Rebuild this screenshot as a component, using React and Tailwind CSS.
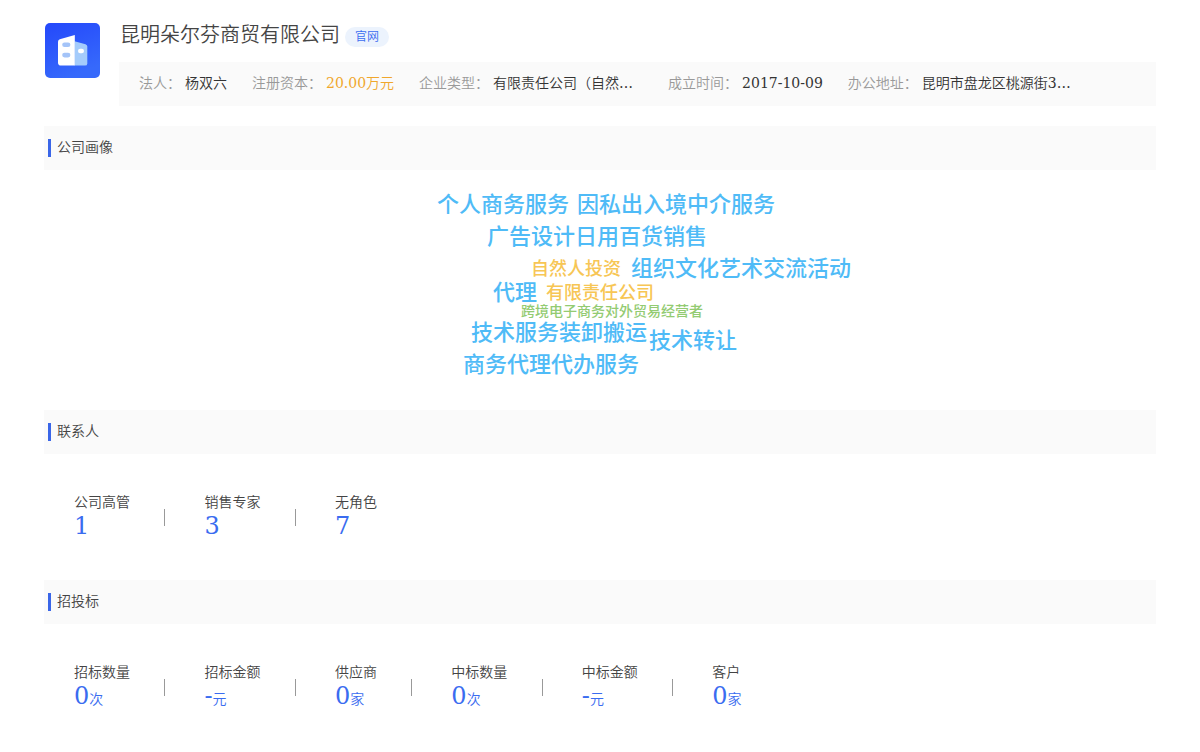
import React from 'react';

const INFO = [
  { label: '法人：', value: '杨双六' },
  { label: '注册资本：', value: '20.00万元', highlight: true },
  { label: '企业类型：', value: '有限责任公司（自然…', wide: true },
  { label: '成立时间：', value: '2017-10-09' },
  { label: '办公地址：', value: '昆明市盘龙区桃源街3…', wide: true },
];

// left/top are relative to the centre column of the cloud
const WORDS = [
  { text: '个人商务服务', className: 'left-0 top-[5px] text-[22px] text-[#4fbbf7]' },
  { text: '因私出入境中介服务', className: 'left-[140px] top-[5px] text-[22px] text-[#4fbbf7]' },
  { text: '广告设计', className: 'left-[50px] top-[37px] text-[22px] text-[#4fbbf7]' },
  { text: '日用百货销售', className: 'left-[138px] top-[37px] text-[22px] text-[#4fbbf7]' },
  { text: '自然人投资', className: 'left-[94px] top-[72px] text-[18px] text-[#f7c655]' },
  { text: '组织文化艺术交流活动', className: 'left-[194px] top-[69px] text-[22px] text-[#4fbbf7]' },
  { text: '代理', className: 'left-[56px] top-[93px] text-[22px] text-[#4fbbf7]' },
  { text: '有限责任公司', className: 'left-[109px] top-[96px] text-[18px] text-[#f7c655]' },
  { text: '跨境电子商务对外贸易经营者', className: 'left-[84px] top-[117px] text-[14px] text-[#93cb72]' },
  { text: '技术服务', className: 'left-[34px] top-[133px] text-[22px] text-[#4fbbf7]' },
  { text: '装卸搬运', className: 'left-[122px] top-[133px] text-[22px] text-[#4fbbf7]' },
  { text: '技术转让', className: 'left-[212px] top-[141px] text-[22px] text-[#4fbbf7]' },
  { text: '商务代理代办服务', className: 'left-[26px] top-[165px] text-[22px] text-[#4fbbf7]' },
];

const CONTACTS = [
  { label: '公司高管', value: '1' },
  { label: '销售专家', value: '3' },
  { label: '无角色', value: '7' },
];

const BIDS = [
  { label: '招标数量', value: '0', unit: '次' },
  { label: '招标金额', value: '-', unit: '元' },
  { label: '供应商', value: '0', unit: '家' },
  { label: '中标数量', value: '0', unit: '次' },
  { label: '中标金额', value: '-', unit: '元' },
  { label: '客户', value: '0', unit: '家' },
];

const CompanyLogo = () => (
  <svg viewBox="0 0 55 55" className="w-[55px] h-[55px] shrink-0" aria-hidden="true">
    <defs>
      <linearGradient id="logo-bg" x1="0" y1="0" x2="0.4" y2="1">
        <stop offset="0" stopColor="#2448fb" />
        <stop offset="1" stopColor="#3669fb" />
      </linearGradient>
    </defs>
    <rect width="55" height="55" rx="5" fill="url(#logo-bg)" />
    <path d="M29.5 18.2 40.5 21.2Q42.3 21.8 42.3 23.6V40.4Q42.3 42.6 40 42.6H29.5Z" fill="#a4cbfb" />
    <path d="M14.8 16.2 29.8 12V42.6H16Q13 42.6 13 39.8V18.6Q13 16.8 14.8 16.2Z" fill="#fff" />
    <rect x="17.2" y="19.4" width="8.2" height="4.6" rx="2.3" fill="#a4c4f8" />
    <rect x="17.2" y="29.8" width="8.2" height="4.6" rx="2.3" fill="#a4c4f8" />
    <rect x="33" y="25.8" width="6" height="4.4" rx="2.2" fill="#fff" />
  </svg>
);

const SectionTitle = ({ children }) => (
  <div className="flex h-11 items-center gap-1.5 bg-[#fafafa] pl-1">
    <span className="h-[18px] w-[3px] bg-[#3a66e8]" />
    <h2 className="pb-0.5 leading-5">{children}</h2>
  </div>
);

const StatList = ({ items }) => (
  <div className="px-[30px] pt-[38px]">
    {items.map((item, i) => (
      <React.Fragment key={item.label}>
        {i > 0 && (
          <>
            {' '}
            <span className="mr-[39px] inline-block h-[17px] w-px bg-[#999] align-middle" />
          </>
        )}
        <div className={i < items.length - 1 ? 'mr-[30px] inline-block align-middle' : 'inline-block align-middle'}>
          <div className="leading-5">{item.label}</div>
          <div className="leading-7 text-[#3a6cf0]">
            <span className="text-2xl leading-7">{item.value}</span>
            {item.unit}
          </div>
        </div>
      </React.Fragment>
    ))}
  </div>
);

const App = () => {
  return (
    <div
      lang="zh-CN"
      className="px-11 pt-[22px] pb-10 font-['DejaVu_Serif','Noto_Sans_CJK_SC',serif] text-sm font-[350] text-[#444]"
    >
      {/* Header */}
      <header className="flex gap-5">
        <div className="pt-px pl-px -mr-px">
          <CompanyLogo />
        </div>
        <div className="min-w-0 flex-1">
          <div className="flex h-10 items-start gap-[5px] pl-px">
            <h1 className="text-xl leading-[26px]">昆明朵尔芬商贸有限公司</h1>
            <a href="#" className="mt-[5px] rounded-full bg-[#ecf3fd] px-2.5 text-xs leading-5 text-[#3a6cf0]">
              官网
            </a>
          </div>
          <div className="flex h-[44px] items-center gap-[25px] bg-[#fafafa] px-5 pb-0.5 whitespace-nowrap">
            {INFO.map((item) => (
              <div key={item.label} className="flex gap-1">
                <span className="text-[#999]">{item.label}</span>
                <span
                  className={
                    item.highlight ? 'text-[#f0a72c]' : item.wide ? 'w-[150px] text-[#333]' : 'text-[#333]'
                  }
                >
                  {item.value}
                </span>
              </div>
            ))}
          </div>
        </div>
      </header>

      {/* Company portrait */}
      <section className="mt-5">
        <SectionTitle>公司画像</SectionTitle>
        <div className="flex h-60 justify-center pt-4">
          <div className="relative w-[326px] font-['Noto_Sans_CJK_SC',sans-serif] font-medium">
            {WORDS.map((word) => (
              <span key={word.text} className={`absolute leading-none whitespace-nowrap ${word.className}`}>
                {word.text}
              </span>
            ))}
          </div>
        </div>
      </section>

      {/* Contacts */}
      <section className="h-[170px]">
        <SectionTitle>联系人</SectionTitle>
        <StatList items={CONTACTS} />
      </section>

      {/* Bidding */}
      <section>
        <SectionTitle>招投标</SectionTitle>
        <StatList items={BIDS} />
      </section>
    </div>
  );
};

export default App;
